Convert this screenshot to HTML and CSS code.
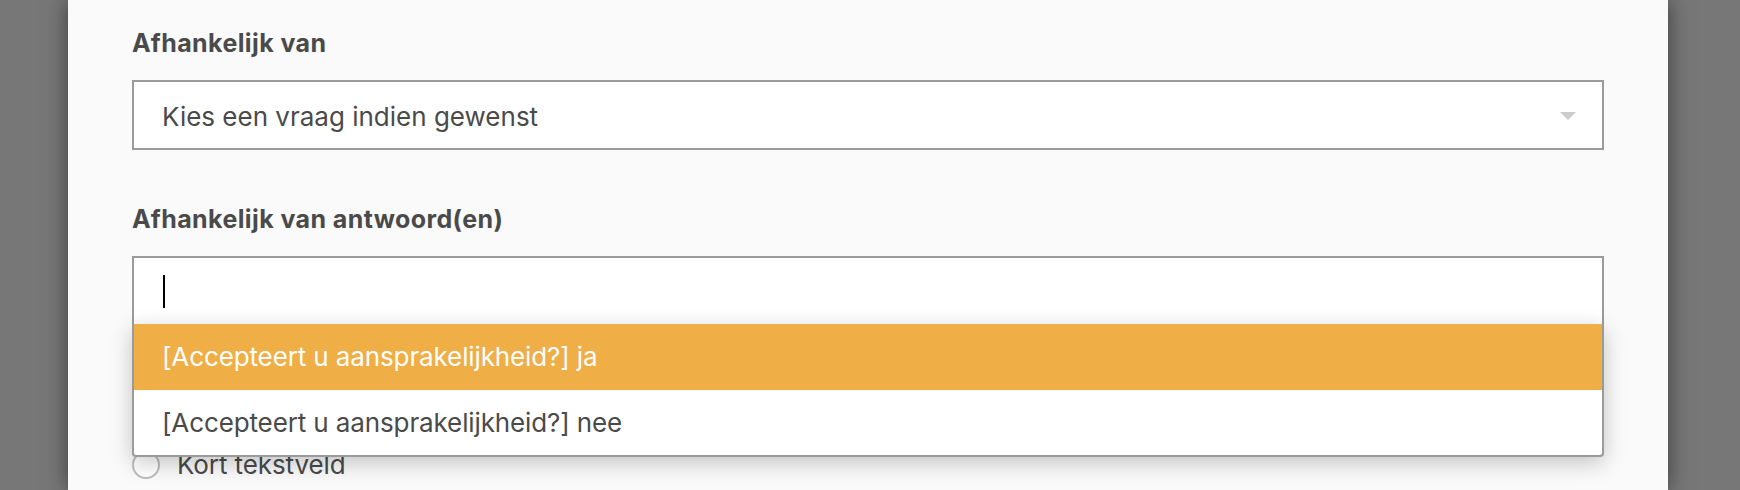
FILE: index.html
```html
<!DOCTYPE html>
<html lang="nl">
<head>
<meta charset="utf-8">
<title>Afhankelijkheid</title>
<link rel="stylesheet" href="styles.css">
</head>
<body>
<div class="overlay">
  <div class="panel">
    <div class="field">
      <div class="label">Afhankelijk van</div>
      <div class="select">
        <span class="select-text">Kies een vraag indien gewenst</span>
        <span class="caret"></span>
      </div>
    </div>
    <div class="field field-answers">
      <div class="label">Afhankelijk van antwoord(en)</div>
      <div class="combo">
        <div class="combo-input"><span class="cursor"></span></div>
        <ul class="menu">
          <li class="option active">[Accepteert u aansprakelijkheid?] ja</li>
          <li class="option last">[Accepteert u aansprakelijkheid?] nee</li>
        </ul>
      </div>
    </div>
    <div class="radio-list">
      <label class="radio"><span class="radio-circle"></span><span class="radio-text">Kort tekstveld</span></label>
    </div>
  </div>
</div>
</body>
</html>
```
FILE: styles.css
```css
* { box-sizing: border-box; }
html, body { margin: 0; height: 490px; overflow: hidden; }
body {
  background: #777777;
  font-family: Inter, "Liberation Sans", sans-serif;
  color: #4a4a4a;
}
.overlay {
  display: flex;
  height: 490px;
  padding-left: 68px;
}
.panel {
  width: 1600px;
  height: 490px;
  background: #fafafa;
  box-shadow: 0 0 20px rgba(0, 0, 0, 0.5);
  padding: 28px 64px 0;
}
.label {
  font-weight: 700;
  font-size: 25px;
  line-height: 30px;
  letter-spacing: 0.4px;
  margin-bottom: 22px;
  color: #4a4a4a;
}
.select {
  height: 70px;
  border: 2px solid #9b9b9b;
  background: #fff;
  display: flex;
  align-items: center;
  justify-content: space-between;
  padding: 3px 26px 0 28px;
}
.select-text {
  font-size: 26px;
  line-height: 30px;
}
.caret {
  width: 0;
  height: 0;
  border-left: 8px solid transparent;
  border-right: 8px solid transparent;
  border-top: 8px solid #cccccc;
  margin-top: -2px;
}
.field-answers { margin-top: 54px; }
.combo { position: relative; }
.combo-input {
  height: 70px;
  border: 2px solid #9b9b9b;
  background: #fff;
  display: flex;
  align-items: center;
  padding-left: 29px;
}
.cursor {
  width: 1.5px;
  height: 33px;
  background: #000;
}
.menu {
  position: absolute;
  left: 0;
  right: 0;
  top: 68px;
  margin: 0;
  padding: 0;
  list-style: none;
  background: #fff;
  border: 2px solid #9b9b9b;
  border-top: 0;
  border-radius: 0 0 4px 4px;
  box-shadow: 0 6px 22px rgba(0, 0, 0, 0.22);
  z-index: 2;
}
.option {
  font-size: 26px;
  line-height: 30px;
  letter-spacing: -0.12px;
  padding: 18px 0 18px 28px;
  color: #4a4a4a;
}
.option.active {
  background: #f0ae46;
  color: #fff;
}
.option.last { padding-bottom: 17px; }
.radio-list { margin-top: 124px; }
.radio {
  display: flex;
  align-items: center;
  gap: 17px;
  font-size: 26px;
  line-height: 30px;
  letter-spacing: -0.1px;
}
.radio-circle {
  width: 28px;
  height: 28px;
  border: 2px solid #bdbdbd;
  border-radius: 50%;
  background: #fff;
}
```
